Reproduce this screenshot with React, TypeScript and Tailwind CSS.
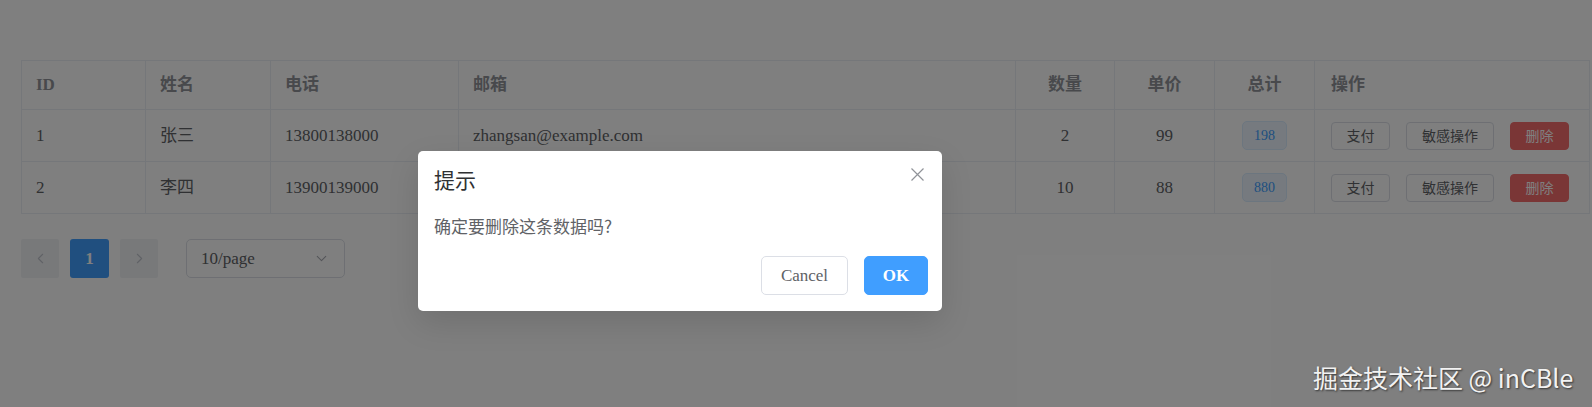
import { ChevronDown, ChevronLeft, ChevronRight } from 'lucide-react'

const rows = [
  { id: 1, name: '张三', phone: '13800138000', email: 'zhangsan@example.com', qty: 2, price: 99 },
  { id: 2, name: '李四', phone: '13900139000', email: 'lisi@example.com', qty: 10, price: 88 },
]

export default function App() {
  return (
    <div className="relative h-[407px] w-full overflow-hidden bg-white font-['Liberation_Serif','Noto_Sans_CJK_SC',serif] text-[#606266]">
      {/* Table */}
      <div className="pl-[21px] pr-[2px] pt-[60px]">
        <table className="w-full table-fixed border-collapse border border-[#ebeef5] text-[17px]">
          <colgroup>
            <col className="w-[124px]" />
            <col className="w-[125px]" />
            <col className="w-[188px]" />
            <col className="w-[557px]" />
            <col className="w-[99px]" />
            <col className="w-[100px]" />
            <col className="w-[100px]" />
            <col />
          </colgroup>
          <thead>
            <tr className="h-[49px] text-left font-bold text-[#909399]">
              <th className="border border-[#ebeef5] pl-[14px]">ID</th>
              <th className="border border-[#ebeef5] pl-[14px]">姓名</th>
              <th className="border border-[#ebeef5] pl-[14px]">电话</th>
              <th className="border border-[#ebeef5] pl-[14px]">邮箱</th>
              <th className="border border-[#ebeef5] text-center">数量</th>
              <th className="border border-[#ebeef5] text-center">单价</th>
              <th className="border border-[#ebeef5] text-center">总计</th>
              <th className="border border-[#ebeef5] pl-[16px]">操作</th>
            </tr>
          </thead>
          <tbody>
            {rows.map((r) => (
              <tr key={r.id} className="h-[52px]">
                <td className="border border-[#ebeef5] pl-[14px]">{r.id}</td>
                <td className="border border-[#ebeef5] pl-[14px]">{r.name}</td>
                <td className="border border-[#ebeef5] pl-[14px]">{r.phone}</td>
                <td className="border border-[#ebeef5] pl-[14px]">{r.email}</td>
                <td className="border border-[#ebeef5] text-center">{r.qty}</td>
                <td className="border border-[#ebeef5] text-center">{r.price}</td>
                <td className="border border-[#ebeef5] text-center">
                  <span className="inline-flex h-[29px] items-center rounded-[5px] border border-[#d9ecff] bg-[#ecf5ff] px-[11px] text-[14px] text-[#409eff]">
                    {r.qty * r.price}
                  </span>
                </td>
                <td className="border border-[#ebeef5] pl-[16px]">
                  <div className="flex items-center gap-[16px] font-['Noto_Sans_CJK_SC',sans-serif] text-[14px]">
                    <button className="h-[28px] w-[59px] rounded-[4px] border border-[#dcdfe6] bg-white text-[#606266]">
                      支付
                    </button>
                    <button className="h-[28px] w-[88px] rounded-[4px] border border-[#dcdfe6] bg-white text-[#606266]">
                      敏感操作
                    </button>
                    <button className="h-[28px] w-[59px] rounded-[4px] border border-[#f56c6c] bg-[#f56c6c] text-white">
                      删除
                    </button>
                  </div>
                </td>
              </tr>
            ))}
          </tbody>
        </table>
      </div>

      {/* Pagination */}
      <div className="ml-[21px] mt-[25px] flex items-center">
        <button className="flex h-[39px] w-[38px] items-center justify-center rounded-[2px] bg-[#f0f2f5] text-[#c0c4cc]">
          <ChevronLeft size={17} strokeWidth={1.5} />
        </button>
        <button className="ml-[11px] flex h-[39px] w-[39px] items-center justify-center rounded-[3px] bg-[#409eff] text-[17px] font-bold text-white">
          1
        </button>
        <button className="ml-[11px] flex h-[39px] w-[38px] items-center justify-center rounded-[2px] bg-[#f0f2f5] text-[#c0c4cc]">
          <ChevronRight size={17} strokeWidth={1.5} />
        </button>
        <div className="ml-[28px] flex h-[39px] w-[159px] items-center justify-between rounded-[5px] border border-[#dcdfe6] pl-[14px] pr-[14px] text-[17px] text-[#606266]">
          <span>10/page</span>
          <ChevronDown size={17} strokeWidth={1.5} className="text-[#a8abb2]" />
        </div>
      </div>

      {/* Mask */}
      <div className="absolute inset-0 bg-black/50" />

      {/* Message box */}
      <div className="absolute left-[418px] top-[151px] h-[160px] w-[524px] rounded-[5px] bg-white pl-[16px] pr-[14px] shadow-[0_12px_32px_rgba(0,0,0,0.12)]">
        <div className="pt-[14px] font-['Noto_Sans_CJK_SC',sans-serif] text-[21px] leading-[29px] text-[#303133]">提示</div>
        <button className="absolute right-[18px] top-[17px] text-[#909399]">
          <svg width="13" height="13" viewBox="0 0 13 13" fill="none" stroke="currentColor" strokeWidth="1.2">
            <path d="M0.5 0.5 L12.5 12.5 M12.5 0.5 L0.5 12.5" />
          </svg>
        </button>
        <div className="mt-[20px] font-['Noto_Sans_CJK_SC',sans-serif] text-[17px] leading-[24px] text-[#606266]">
          确定要删除这条数据吗?
        </div>
        <div className="mt-[18px] flex justify-end gap-[16px]">
          <button className="h-[39px] w-[87px] rounded-[5px] border border-[#dcdfe6] bg-white text-[17px] text-[#606266]">
            Cancel
          </button>
          <button className="h-[39px] w-[64px] rounded-[5px] border border-[#409eff] bg-[#409eff] text-[17px] font-bold text-white">
            OK
          </button>
        </div>
      </div>

      {/* Watermark */}
      <div className="absolute left-[1313px] top-[362px] whitespace-nowrap font-['Noto_Sans_CJK_SC',sans-serif] text-[25px] leading-[30px] text-[#f2f2f2] [text-shadow:1px_1px_2px_rgba(0,0,0,0.6)]">
        掘金技术社区 @ inCBle
      </div>
    </div>
  )
}
